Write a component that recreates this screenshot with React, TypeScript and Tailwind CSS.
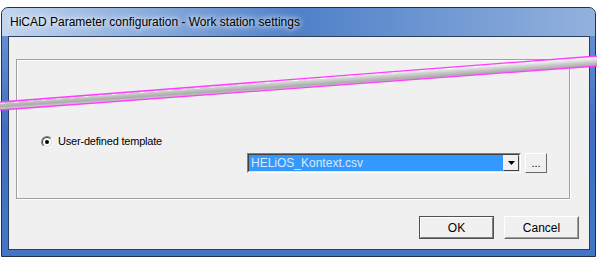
import React from 'react';

const uiFont = { fontFamily: '"Liberation Sans", Arial, sans-serif' };

function RadioDot() {
  return (
    <span className="relative flex h-[12px] w-[12px] items-center justify-center rounded-full border border-t-[#808080] border-l-[#808080] border-b-[#ffffff] border-r-[#ffffff]">
      <span className="flex h-[10px] w-[10px] items-center justify-center rounded-full border border-t-[#404040] border-l-[#404040] border-b-[#d4d0c8] border-r-[#d4d0c8] bg-white">
        <span className="h-[4px] w-[4px] rounded-full bg-black" />
      </span>
    </span>
  );
}

function ClassicButton({ label, isDefault }: { label: string; isDefault?: boolean }) {
  if (isDefault) {
    return (
      <div className="h-[23px] w-[75px] border border-[#505050]">
        <div className="flex h-full w-full items-center justify-center border border-t-white border-l-white border-b-[#808080] border-r-[#808080] bg-[#f0f0f0] text-[12px] text-black">
          {label}
        </div>
      </div>
    );
  }
  return (
    <div className="h-[23px] w-[75px] border border-t-white border-l-white border-b-[#696969] border-r-[#696969]">
      <div className="flex h-full w-full items-center justify-center border border-t-[#f0f0f0] border-l-[#f0f0f0] border-b-[#a0a0a0] border-r-[#a0a0a0] bg-[#f0f0f0] text-[12px] text-black">
        {label}
      </div>
    </div>
  );
}

export default function App() {
  return (
    <div className="relative h-[258px] w-[597px] overflow-hidden bg-white" style={uiFont}>
      <div className="pt-[7px] pl-[1px]">
        {/* window frame */}
        <div className="flex h-[250px] w-[595px] flex-col rounded-t-[7px] border border-[#22324a] bg-gradient-to-b from-[#6f97d8] via-[#3f6ec2] to-[#4576c6]">
          {/* title bar */}
          <div className="flex h-[28px] items-center rounded-t-[6px] bg-gradient-to-r from-[#c3d5ee] via-[#4f80c8] to-[#93b1dd] pl-[8px]">
            <span className="text-[12px] text-black [text-shadow:0_0_5px_#ffffff,0_0_9px_#eef4ff]">
              HiCAD Parameter configuration - Work station settings
            </span>
          </div>

          {/* client area */}
          <div className="mb-[6px] ml-[6px] mr-[5px] flex flex-1 flex-col border border-[#2c3f5a] bg-[#f0f0f0]">
            {/* group box */}
            <div className="ml-[7px] mr-[19px] mt-[22px] flex h-[140px] flex-col border border-[#a0a0a0] pt-[75px] shadow-[inset_1px_1px_0_#ffffff,1px_1px_0_#ffffff]">
              <div className="flex h-[13px] items-center gap-[5px] pl-[24px]">
                <RadioDot />
                <span className="text-[11px] tracking-[-0.2px] text-black">User-defined template</span>
              </div>

              <div className="mt-[5px] flex items-center gap-[4px] pl-[230px]">
                {/* combo box */}
                <div className="flex h-[20px] w-[274px] border border-t-[#808080] border-l-[#808080] border-b-white border-r-white">
                  <div className="flex flex-1 border border-t-[#404040] border-l-[#404040] border-b-[#e3e3e3] border-r-[#e3e3e3] bg-white">
                    <div className="flex flex-1 items-center bg-[#3399ff] pl-[2px] text-[12px] text-[#dce8fa]">
                      HELiOS_Kontext.csv
                    </div>
                    <div className="flex w-[16px] items-center justify-center border border-t-[#f0f0f0] border-l-[#f0f0f0] border-b-[#404040] border-r-[#404040] bg-[#f0f0f0]">
                      <svg width="7" height="4" viewBox="0 0 7 4">
                        <path d="M0 0 H7 L3.5 4 Z" fill="#000" />
                      </svg>
                    </div>
                  </div>
                </div>
                {/* browse button */}
                <div className="flex h-[20px] w-[22px] items-end justify-center border border-t-white border-l-white border-b-[#696969] border-r-[#696969] bg-[#f0f0f0] pb-[3px] text-[11px] leading-none text-black">
                  ...
                </div>
              </div>
            </div>

            {/* buttons */}
            <div className="mt-[17px] flex justify-end gap-[10px] pr-[10px]">
              <ClassicButton label="OK" isDefault />
              <ClassicButton label="Cancel" />
            </div>
          </div>
        </div>
      </div>

      {/* torn-edge cut marker lying over the dialog */}
      <svg className="pointer-events-none absolute left-0 top-0" width="597" height="258" viewBox="0 0 597 258">
        <defs>
          <linearGradient id="tear" gradientUnits="userSpaceOnUse" x1="300" y1="79" x2="300.62" y2="88">
            <stop offset="0" stopColor="#ececec" />
            <stop offset="0.35" stopColor="#cbcbcb" />
            <stop offset="0.75" stopColor="#acacac" />
            <stop offset="1" stopColor="#c6c6c6" />
          </linearGradient>
        </defs>
        <polygon points="0,102 597,56 597,66 0,110" fill="url(#tear)" />
        <line x1="0" y1="103.3" x2="597" y2="57.3" stroke="#ffffff" strokeWidth="0.8" strokeDasharray="5 9" />
        <line x1="0" y1="102" x2="597" y2="56" stroke="#ff3cff" strokeWidth="1.3" />
        <line x1="0" y1="110" x2="597" y2="66" stroke="#ff3cff" strokeWidth="1.3" />
      </svg>
    </div>
  );
}
